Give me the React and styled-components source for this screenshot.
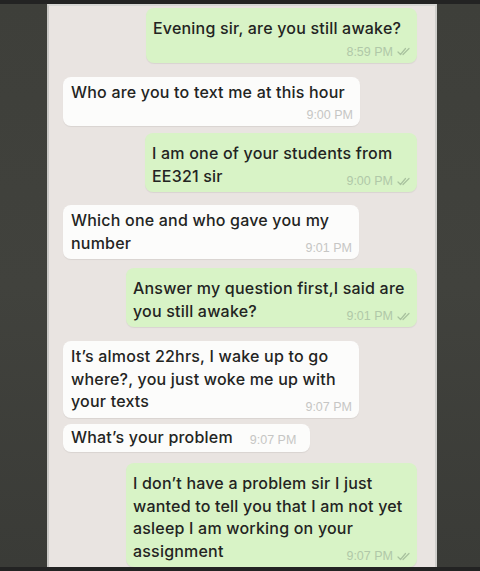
import React from "react"
import styled, { createGlobalStyle } from "styled-components"

const GlobalStyle = createGlobalStyle`
  html, body {
    margin: 0;
    padding: 0;
    background: #262626;
  }
`

const Frame = styled.div`
  width: 480px;
  height: 571px;
  box-sizing: border-box;
  padding: 4px 0;
  display: flex;
  background: #232323;
  overflow: hidden;
`

const Side = styled.div`
  flex: none;
  width: ${p => p.$w}px;
  background: linear-gradient(180deg, #3e3f3a 0%, #41423d 50%, #3a3b37 100%);
`

const Chat = styled.div`
  flex: 1;
  min-width: 0;
  display: flex;
  flex-direction: column;
  box-sizing: border-box;
  padding: 2px 18px 0 14px;
  background: #e9e4e1;
  border-top: 2px solid #d6d6d3;
  border-left: 2px solid #c9c8c5;
  border-right: 2px solid #cfcecb;
  overflow: hidden;
`

const Bubble = styled.div`
  flex: none;
  position: relative;
  box-sizing: border-box;
  align-self: ${p => (p.$out ? "flex-end" : "flex-start")};
  width: ${p => p.$w}px;
  margin-top: ${p => p.$mt}px;
  padding: ${p => (p.$row ? 2 : p.$out ? 9 : 4)}px 7px ${p => (p.$row ? 4 : 5)}px ${p => (p.$out ? 7 : 8)}px;
  background: ${p => (p.$out ? "#d8f3c6" : "#fcfcfb")};
  border-radius: 8px;
  box-shadow: 0 1px 1px rgba(0, 0, 0, 0.07);
  display: ${p => (p.$row ? "flex" : "block")};
  align-items: center;
  gap: 17px;
`

const Text = styled.div`
  font-family: Inter, "Liberation Sans", sans-serif;
  font-size: 16px;
  font-weight: 500;
  letter-spacing: 0.2px;
  line-height: 22.5px;
  color: #232422;
  white-space: nowrap;
`

const Meta = styled.div`
  height: 12px;
  margin-top: ${p => (p.$row ? "6px" : p.$stacked ? "6px" : "-12px")};
  display: flex;
  justify-content: flex-end;
  align-items: center;
  gap: 4px;
  font-family: "Liberation Sans", Arial, sans-serif;
  font-size: 12.5px;
  color: ${p => (p.$out ? "#b0c8a8" : "#c6c6c4")};
  white-space: nowrap;
`

const Ticks = ({ color }) => (
  <svg width="13" height="9" viewBox="0 0 13 9" fill="none">
    <path d="M1 5l2.5 2.5L8.5 1.5" stroke={color} strokeWidth="1.2" strokeLinecap="round" strokeLinejoin="round" />
    <path d="M6 7.5L12 1.5" stroke={color} strokeWidth="1.2" strokeLinecap="round" />
  </svg>
)

const messages = [
  { out: true, w: 271, mt: 0, lines: ["Evening sir, are you still awake?"], time: "8:59 PM", stacked: true },
  { out: false, w: 297, mt: 14, lines: ["Who are you to text me at this hour"], time: "9:00 PM", stacked: true },
  { out: true, w: 272, mt: 7, lines: ["I am one of your students from", "EE321 sir"], time: "9:00 PM" },
  { out: false, w: 296, mt: 13, lines: ["Which one and who gave you my", "number"], time: "9:01 PM" },
  { out: true, w: 291, mt: 9, lines: ["Answer my question first,I said are", "you still awake?"], time: "9:01 PM" },
  {
    out: false,
    w: 296,
    mt: 14,
    lines: ["It\u2019s almost 22hrs, I wake up to go", "where?, you just woke me up with", "your texts"],
    time: "9:07 PM",
  },
  { out: false, w: 247, mt: 6, lines: ["What\u2019s your problem"], time: "9:07 PM", row: true },
  {
    out: true,
    w: 291,
    mt: 11,
    lines: [
      "I don\u2019t have a problem sir I just",
      "wanted to tell you that I am not yet",
      "asleep I am working on your",
      "assignment",
    ],
    time: "9:07 PM",
  },
]

export default function App() {
  return (
    <>
      <GlobalStyle />
      <Frame>
        <Side $w={47} />
        <Chat>
          {messages.map((m, i) => (
            <Bubble key={i} $out={m.out} $w={m.w} $mt={m.mt} $row={m.row}>
              <Text>
                {m.lines.map((l, j) => (
                  <React.Fragment key={j}>
                    {j > 0 && <br />}
                    {l}
                  </React.Fragment>
                ))}
              </Text>
              <Meta $out={m.out} $stacked={m.stacked} $row={m.row}>
                {m.time}
                {m.out && <Ticks color="#a9c29f" />}
              </Meta>
            </Bubble>
          ))}
        </Chat>
        <Side $w={43} />
      </Frame>
    </>
  )
}
